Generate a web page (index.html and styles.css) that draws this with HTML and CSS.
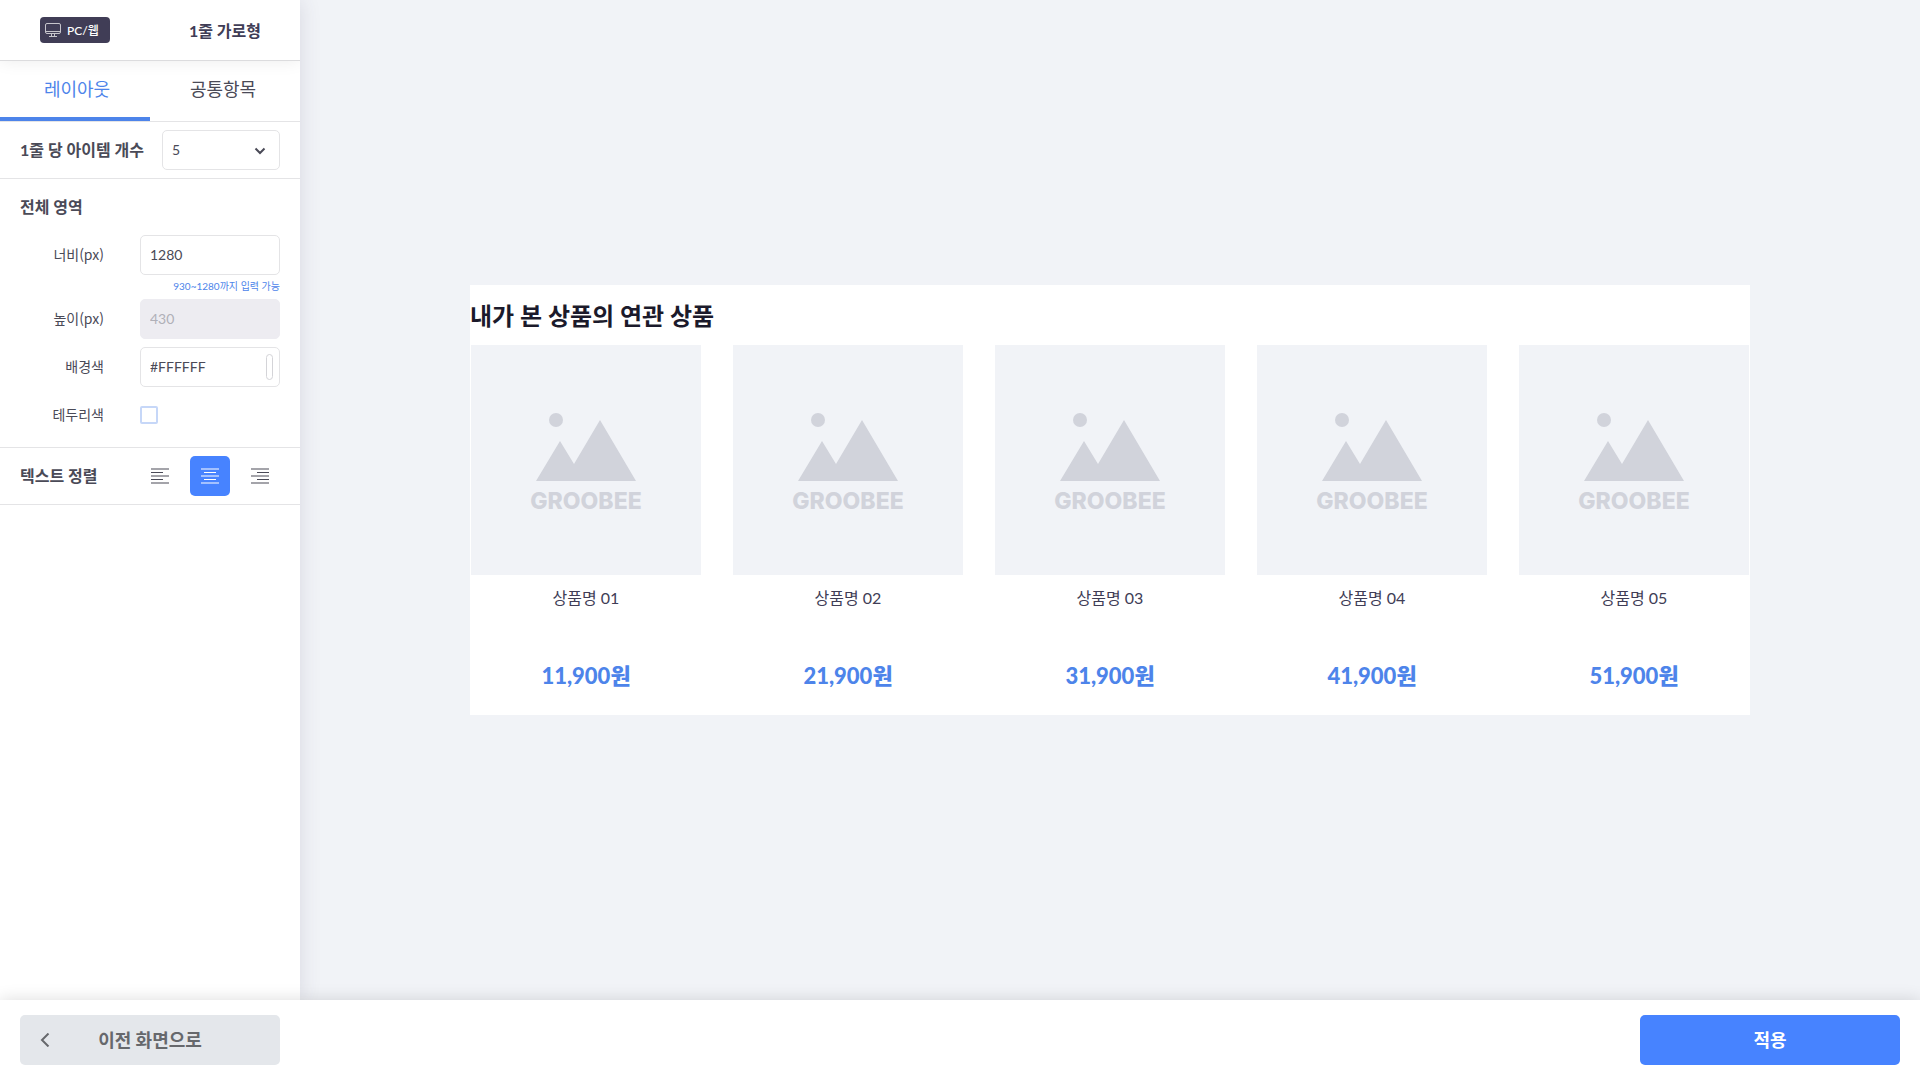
FILE: index.html
```html
<!DOCTYPE html>
<html lang="ko">
<head>
    <meta charset="UTF-8">
    <meta name="viewport" content="width=device-width, initial-scale=1.0">
    <title>1줄 가로형</title>
    <link rel="stylesheet" href="styles.css">
</head>
<body>

    <!-- shared artwork -->
    <svg class="sprite" aria-hidden="true">
        <symbol id="noImage" viewBox="0 0 230 230">
            <circle cx="85" cy="75" r="7"/>
            <path d="M65 136 L89 96 L103 119 L129 75 L165 136 Z"/>
        </symbol>
    </svg>

    <div class="workspace">
        <aside class="sidebar">
            <header class="sidebar-header">
                <div class="header-cell">
                    <span class="device">
                        <svg width="16" height="14" viewBox="0 0 16 14" fill="none" stroke="currentColor">
                            <rect x="0.5" y="0.5" width="15" height="10" rx="1.5"/>
                            <path d="M1 8.5h14M6.5 11v2M9.5 11v2M4 13.5h8"/>
                        </svg>
                        <span>PC/웹</span>
                    </span>
                </div>
                <h1 class="header-cell title">1줄 가로형</h1>
            </header>

            <nav class="tabs">
                <button type="button" class="tab active">레이아웃</button>
                <button type="button" class="tab">공통항목</button>
            </nav>

            <form id="layoutForm">
                <div class="row">
                    <label class="row-title" for="itemCount">1줄 당 아이템 개수</label>
                    <div class="select-box">
                        <select id="itemCount" name="itemCount">
                            <option>3</option>
                            <option>4</option>
                            <option selected>5</option>
                        </select>
                        <svg class="arrow" width="12" height="8" viewBox="0 0 12 8" fill="none" stroke="currentColor" stroke-width="2">
                            <path d="M1.5 1.5L6 6l4.500-4.500"/>
                        </svg>
                    </div>
                </div>

                <section class="area">
                    <h2 class="row-title">전체 영역</h2>
                    <div class="field">
                        <label for="width">너비(px)</label>
                        <input type="text" id="width" name="width" value="1280">
                    </div>
                    <p class="hint">930~1280까지 입력 가능</p>
                    <div class="field">
                        <label for="height">높이(px)</label>
                        <input type="text" id="height" name="height" value="430" disabled>
                    </div>
                    <div class="field">
                        <label for="bgColor">배경색</label>
                        <div class="color-box">
                            <input type="text" id="bgColor" name="bgColor" value="#FFFFFF">
                            <button type="button" class="swatch" aria-label="배경색 선택"></button>
                        </div>
                    </div>
                    <div class="field">
                        <label for="borderColor">테두리색</label>
                        <input type="checkbox" id="borderColor" name="borderColor">
                    </div>
                </section>

                <div class="row">
                    <span class="row-title">텍스트 정렬</span>
                    <div class="aligns">
                        <button type="button" class="align" aria-label="왼쪽 정렬">
                            <svg width="18" height="16" viewBox="0 0 18 16" stroke="currentColor" stroke-width="1.1">
                                <path d="M0 1h18M0 4.5h12M0 8h18M0 11.5h12M0 15h18"/>
                            </svg>
                        </button>
                        <button type="button" class="align active" aria-label="가운데 정렬">
                            <svg width="18" height="16" viewBox="0 0 18 16" stroke="currentColor" stroke-width="1.1">
                                <path d="M0 1h18M3 4.5h12M0 8h18M3 11.5h12M0 15h18"/>
                            </svg>
                        </button>
                        <button type="button" class="align" aria-label="오른쪽 정렬">
                            <svg width="18" height="16" viewBox="0 0 18 16" stroke="currentColor" stroke-width="1.1">
                                <path d="M0 1h18M6 4.5h12M0 8h18M6 11.5h12M0 15h18"/>
                            </svg>
                        </button>
                    </div>
                </div>
            </form>
        </aside>

        <main class="preview">
            <div class="widget">
                <h2 class="widget-title">내가 본 상품의 연관 상품</h2>
                <ul class="items">
                    <li class="item">
                        <svg class="thumb" viewBox="0 0 230 230">
                            <use href="#noImage"/>
                            <text x="115" y="164" text-anchor="middle">GROOBEE</text>
                        </svg>
                        <p class="name">상품명 01</p>
                        <p class="price">11,900원</p>
                    </li>
                    <li class="item">
                        <svg class="thumb" viewBox="0 0 230 230">
                            <use href="#noImage"/>
                            <text x="115" y="164" text-anchor="middle">GROOBEE</text>
                        </svg>
                        <p class="name">상품명 02</p>
                        <p class="price">21,900원</p>
                    </li>
                    <li class="item">
                        <svg class="thumb" viewBox="0 0 230 230">
                            <use href="#noImage"/>
                            <text x="115" y="164" text-anchor="middle">GROOBEE</text>
                        </svg>
                        <p class="name">상품명 03</p>
                        <p class="price">31,900원</p>
                    </li>
                    <li class="item">
                        <svg class="thumb" viewBox="0 0 230 230">
                            <use href="#noImage"/>
                            <text x="115" y="164" text-anchor="middle">GROOBEE</text>
                        </svg>
                        <p class="name">상품명 04</p>
                        <p class="price">41,900원</p>
                    </li>
                    <li class="item">
                        <svg class="thumb" viewBox="0 0 230 230">
                            <use href="#noImage"/>
                            <text x="115" y="164" text-anchor="middle">GROOBEE</text>
                        </svg>
                        <p class="name">상품명 05</p>
                        <p class="price">51,900원</p>
                    </li>
                </ul>
            </div>
        </main>
    </div>

    <footer class="bottom-bar">
        <button type="button" class="btn btn-back">
            <svg width="10" height="14" viewBox="0 0 10 14" fill="none" stroke="currentColor" stroke-width="2">
                <path d="M8.500 0.500L2 7l6.500 6.500"/>
            </svg>
            <span>이전 화면으로</span>
        </button>
        <button type="submit" form="layoutForm" class="btn btn-apply">적용</button>
    </footer>

</body>
</html>
```
FILE: styles.css
```css
* {
    box-sizing: border-box;
}

body {
    margin: 0;
    min-height: 100vh;
    display: flex;
    flex-direction: column;
    font-family: Lato, "Noto Sans CJK KR", sans-serif;
    font-size: 14px;
    color: #4a4a57;
    background-color: #fff;
}

h1, h2, p, ul {
    margin: 0;
    padding: 0;
}

button, input, select {
    font-family: inherit;
    font-size: 14px;
    color: inherit;
}

button {
    padding: 0;
    border: none;
    background: none;
    cursor: pointer;
}

.sprite {
    position: absolute;
    width: 0;
    height: 0;
}

.workspace {
    flex: 1;
    display: flex;
}

/* Sidebar */
.sidebar {
    width: 300px;
    flex-shrink: 0;
    background-color: #fff;
    box-shadow: 0 0 20px rgba(64, 60, 90, 0.14);
    z-index: 1;
}

.sidebar-header {
    display: flex;
    height: 61px;
    border-bottom: 1px solid #dcdcde;
    box-shadow: 0 0 16px rgba(0, 0, 0, 0.08);
    clip-path: inset(0 0 -16px 0);
}

.header-cell {
    flex: 1;
    display: flex;
    align-items: center;
    justify-content: center;
}

.title {
    font-size: 16px;
    color: #403d56;
}

.device {
    display: flex;
    align-items: center;
    gap: 6px;
    width: 70px;
    height: 26px;
    padding-left: 5px;
    border-radius: 4px;
    background-color: #403d56;
    color: #fff;
    font-size: 12px;
    font-weight: 500;
    white-space: nowrap;
}

.device span {
    padding-bottom: 2px;
}

.device svg {
    opacity: 0.7;
}

.tabs {
    display: flex;
    height: 61px;
    border-bottom: 1px solid #e4e4e6;
}

.tab {
    flex: 1;
    padding: 0 4px 6px 0;
    font-size: 18px;
    border-top: 4px solid transparent;
    border-bottom: 4px solid transparent;
}

.tab.active {
    padding: 0 0 6px 4px;
    color: #4d84ea;
    border-bottom-color: #4d84ea;
}

.row {
    display: flex;
    align-items: center;
    justify-content: space-between;
    height: 57px;
    padding: 0 20px;
    border-bottom: 1px solid #e4e4e6;
}

.row-title {
    font-size: 16px;
    font-weight: bold;
    white-space: nowrap;
}

.row .row-title {
    padding-bottom: 2px;
}

.select-box {
    position: relative;
    width: 118px;
}

select, input[type="text"] {
    width: 100%;
    height: 40px;
    padding: 0 9px 2px;
    border: 1px solid #e4e4e6;
    border-radius: 5px;
    background-color: #fff;
    appearance: none;
    outline: none;
}

.arrow {
    position: absolute;
    top: 17px;
    right: 14px;
    pointer-events: none;
}

.area {
    padding: 16px 20px;
    border-bottom: 1px solid #e4e4e6;
}

.area .row-title {
    line-height: 24px;
    margin-bottom: 16px;
}

.field {
    display: grid;
    grid-template-columns: 84px 140px;
    justify-content: space-between;
    align-items: center;
    height: 40px;
    margin-bottom: 8px;
}

.field:last-child {
    margin-bottom: -4px;
}

.field label {
    padding-bottom: 2px;
    font-family: "Noto Sans CJK KR", sans-serif;
    text-align: right;
}

.hint {
    margin: -8px 0 0;
    padding-bottom: 2px;
    line-height: 22px;
    font-size: 10px;
    text-align: right;
    color: #4d84ea;
}

input[type="text"]:disabled {
    background-color: #edecf1;
    border-color: #edecf1;
    color: #b0b0b8;
}

.color-box {
    position: relative;
}

.swatch {
    position: absolute;
    top: 7px;
    right: 7px;
    width: 7px;
    height: 26px;
    border: 1px solid #d4d4d8;
    border-radius: 4px;
}

input[type="checkbox"] {
    width: 18px;
    height: 18px;
    margin: 0;
    border: 2px solid #c6d7f8;
    border-radius: 2px;
    background-color: #fff;
    appearance: none;
}

.aligns {
    display: flex;
    gap: 10px;
}

.align {
    display: flex;
    align-items: center;
    justify-content: center;
    width: 40px;
    height: 40px;
    border-radius: 5px;
}

.align.active {
    background-color: #4783ff;
    color: #fff;
}

/* Preview */
.preview {
    flex: 1;
    display: flex;
    align-items: center;
    justify-content: center;
    background-color: #f1f3f7;
}

.widget {
    width: 100%;
    max-width: 1280px;
    min-height: 430px;
    background-color: #fff;
}

.widget-title {
    padding: 13px 0 11px;
    line-height: 36px;
    font-size: 24px;
    font-weight: bold;
    color: #1b1a2b;
}

.items {
    display: flex;
    gap: 32px;
    padding: 0 1px;
    list-style: none;
}

.item {
    flex: 1;
    text-align: center;
}

.thumb {
    display: block;
    width: 100%;
    background-color: #f1f3f7;
    fill: #d1d3db;
    font-family: Inter, sans-serif;
    font-size: 23px;
    font-weight: 800;
}

.name {
    height: 64px;
    padding-top: 11px;
    line-height: 24px;
    font-size: 16px;
    color: #403d56;
}

.price {
    padding: 19px 0 21px;
    line-height: 36px;
    font-size: 22px;
    font-weight: 900;
    color: #4d84ea;
}

/* Bottom buttons */
.bottom-bar {
    display: flex;
    align-items: center;
    justify-content: space-between;
    height: 80px;
    padding: 0 20px;
    background-color: #fff;
    box-shadow: 0 0 16px rgba(0, 0, 0, 0.14);
    z-index: 2;
}

.btn {
    width: 260px;
    height: 50px;
    padding-bottom: 2px;
    border-radius: 5px;
    font-size: 18px;
    font-weight: bold;
}

.btn-back {
    display: flex;
    align-items: center;
    padding: 0 20px;
    background-color: #e4e7eb;
    color: #66686c;
}

.btn-back span {
    flex: 1;
    padding: 0 10px 2px 0;
}

.btn-apply {
    background-color: #4783ff;
    color: #fff;
}
```
